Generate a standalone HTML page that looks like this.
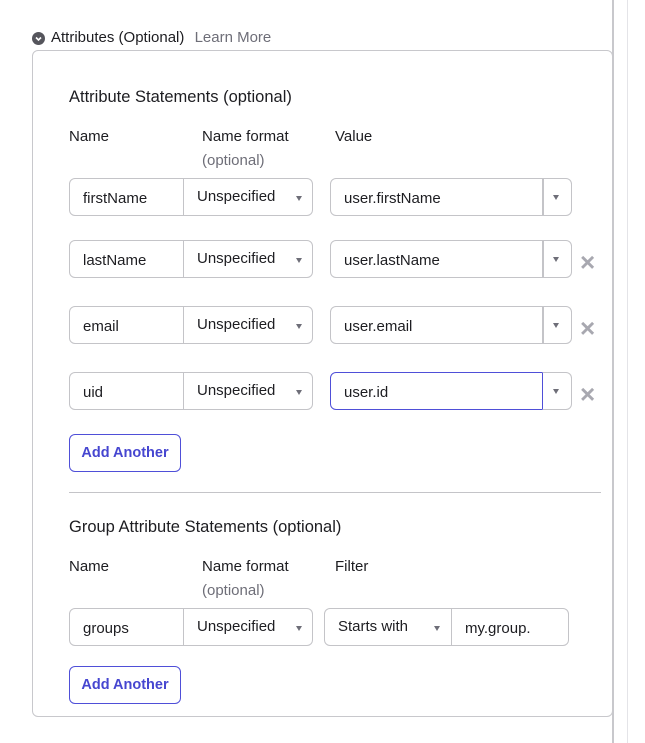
<!DOCTYPE html>
<html><head><style>
body{margin:0;width:645px;height:743px;background:#fff;font-family:"Liberation Sans",sans-serif;color:#1d1d21;position:relative;overflow:hidden}
.a{position:absolute}
.t{font-size:15px;white-space:nowrap}
.box{position:absolute;border:1px solid #c4c4c8;background:#fff;box-sizing:border-box;font-size:15px;line-height:39px;padding-left:13px}
.l{border-radius:6px 0 0 6px}
.r{border-radius:0 6px 6px 0;border-left:none}
.arr{position:absolute;width:0;height:0;border-left:3.5px solid transparent;border-right:3.5px solid transparent;border-top:5px solid #6e6e78}
.x{position:absolute;font-size:26px;color:#a8a8b0;line-height:20px;font-weight:bold}
.btn{position:absolute;border:1px solid #4f4fd8;border-radius:6px;color:#4646d0;font-weight:bold;font-size:14.5px;text-align:center;line-height:37px;box-sizing:border-box;width:112px;height:38px}
.g{color:#6e6e78}
.u{line-height:36px}
</style></head><body>
<div class="a" style="left:612px;top:0;width:2px;height:743px;background:#c8c8cc"></div>
<div class="a" style="left:627px;top:0;width:1px;height:743px;background:#e4e4e8"></div>
<div class="a" style="left:32px;top:32px;width:13px;height:13px;border-radius:50%;background:#55555c"></div>
<svg class="a" style="left:34px;top:34px" width="9" height="9"><path d="M2 3.5 L4.5 6 L7 3.5" stroke="#fff" stroke-width="1.6" fill="none"/></svg>
<div class="a t" style="left:51px;top:29px">Attributes (Optional) <span class="g" style="margin-left:6px">Learn More</span></div>
<div class="a" style="left:32px;top:50px;width:581px;height:667px;border:1px solid #c8c8cc;border-radius:6px;box-sizing:border-box"></div>

<div class="a" style="left:69px;top:88px;font-size:16.5px">Attribute Statements (optional)</div>
<div class="a t" style="left:69px;top:128px">Name</div>
<div class="a t" style="left:202px;top:128px">Name format</div>
<div class="a t g" style="left:202px;top:152px">(optional)</div>
<div class="a t" style="left:335px;top:128px">Value</div>

<div class="box l" style="left:69px;top:178px;width:115px;height:38px">firstName</div>
<div class="box r u" style="left:183px;top:178px;width:130px;height:38px;border-left:1px solid #c4c4c8">Unspecified</div><div class="arr" style="left:296px;top:196px"></div>
<div class="box l" style="left:330px;top:178px;width:213px;height:38px">user.firstName</div>
<div class="box r" style="left:542px;top:178px;width:30px;height:38px;border-left:2px solid #c4c4c8"></div><div class="arr" style="left:553px;top:195px"></div>

<div class="box l" style="left:69px;top:240px;width:115px;height:38px">lastName</div>
<div class="box r u" style="left:183px;top:240px;width:130px;height:38px;border-left:1px solid #c4c4c8">Unspecified</div><div class="arr" style="left:296px;top:258px"></div>
<div class="box l" style="left:330px;top:240px;width:213px;height:38px">user.lastName</div>
<div class="box r" style="left:542px;top:240px;width:30px;height:38px;border-left:2px solid #c4c4c8"></div><div class="arr" style="left:553px;top:257px"></div>
<div class="x" style="left:580px;top:252px">×</div>

<div class="box l" style="left:69px;top:306px;width:115px;height:38px">email</div>
<div class="box r u" style="left:183px;top:306px;width:130px;height:38px;border-left:1px solid #c4c4c8">Unspecified</div><div class="arr" style="left:296px;top:324px"></div>
<div class="box l" style="left:330px;top:306px;width:213px;height:38px">user.email</div>
<div class="box r" style="left:542px;top:306px;width:30px;height:38px;border-left:2px solid #c4c4c8"></div><div class="arr" style="left:553px;top:323px"></div>
<div class="x" style="left:580px;top:318px">×</div>

<div class="box l" style="left:69px;top:372px;width:115px;height:38px">uid</div>
<div class="box r u" style="left:183px;top:372px;width:130px;height:38px;border-left:1px solid #c4c4c8">Unspecified</div><div class="arr" style="left:296px;top:390px"></div>
<div class="box l" style="left:330px;top:372px;width:213px;height:38px;border-color:#4f4fd8">user.id</div>
<div class="box r" style="left:542px;top:372px;width:30px;height:38px;border-left:1px solid #4f4fd8"></div><div class="arr" style="left:553px;top:389px"></div>
<div class="x" style="left:580px;top:384px">×</div>

<div class="btn" style="left:69px;top:434px">Add Another</div>
<div class="a" style="left:69px;top:492px;width:532px;height:1px;background:#c4c4c8"></div>

<div class="a" style="left:69px;top:518px;font-size:16.5px">Group Attribute Statements (optional)</div>
<div class="a t" style="left:69px;top:558px">Name</div>
<div class="a t" style="left:202px;top:558px">Name format</div>
<div class="a t g" style="left:202px;top:582px">(optional)</div>
<div class="a t" style="left:335px;top:558px">Filter</div>

<div class="box l" style="left:69px;top:608px;width:115px;height:38px">groups</div>
<div class="box r u" style="left:183px;top:608px;width:130px;height:38px;border-left:1px solid #c4c4c8">Unspecified</div><div class="arr" style="left:296px;top:626px"></div>
<div class="box l u" style="left:324px;top:608px;width:128px;height:38px">Starts with</div><div class="arr" style="left:434px;top:626px"></div>
<div class="box r" style="left:451px;top:608px;width:118px;height:38px;border-left:1px solid #c4c4c8">my.group.</div>

<div class="btn" style="left:69px;top:666px">Add Another</div>
</body></html>
